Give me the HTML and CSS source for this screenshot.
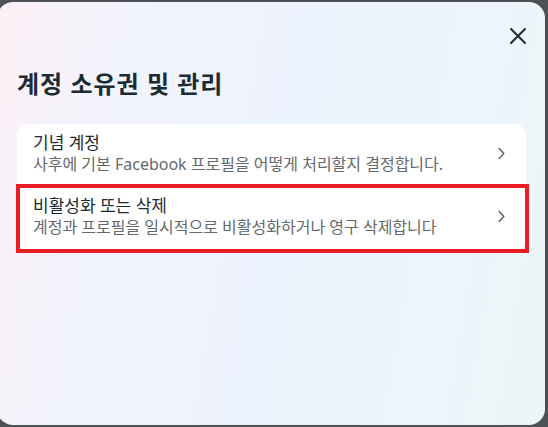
FILE: index.html
```html
<!DOCTYPE html>
<html lang="ko">
<head>
    <meta charset="UTF-8">
    <meta name="viewport" content="width=device-width, initial-scale=1.0">
    <title>계정 소유권 및 관리</title>
    <link rel="stylesheet" href="styles.css">
</head>
<body>
    <div class="dialog">
        <div class="dialog-top">
            <button class="close" aria-label="닫기">
                <svg width="18" height="18" viewBox="0 0 18 18">
                    <path d="M2 2 L16 16 M16 2 L2 16" stroke="#1c2b33" stroke-width="2" stroke-linecap="round" fill="none"/>
                </svg>
            </button>
        </div>
        <h2 class="title">계정 소유권 및 관리</h2>

        <div class="card">
            <a class="item" href="#">
                <div class="item-text">
                    <div class="item-title">기념 계정</div>
                    <div class="item-desc">사후에 기본 Facebook 프로필을 어떻게 처리할지 결정합니다.</div>
                </div>
                <svg class="chevron" width="7" height="13" viewBox="0 0 7 13">
                    <path d="M1.2 1.5 L5.8 6.5 L1.2 11.5" stroke="#606770" stroke-width="1.6" stroke-linecap="round" stroke-linejoin="round" fill="none"/>
                </svg>
            </a>
            <a class="item marked" href="#">
                <div class="item-text">
                    <div class="item-title">비활성화 또는 삭제</div>
                    <div class="item-desc">계정과 프로필을 일시적으로 비활성화하거나 영구 삭제합니다</div>
                </div>
                <svg class="chevron" width="7" height="13" viewBox="0 0 7 13">
                    <path d="M1.2 1.5 L5.8 6.5 L1.2 11.5" stroke="#606770" stroke-width="1.6" stroke-linecap="round" stroke-linejoin="round" fill="none"/>
                </svg>
            </a>
        </div>
    </div>
</body>
</html>
```

FILE: styles.css
```css
body {
    margin: 0;
    background-color: #4d5054;
    font-family: "Noto Sans", "Noto Sans CJK KR", sans-serif;
    overflow: hidden;
}
.dialog {
    box-sizing: border-box;
    width: 548px;
    height: 423px;
    margin: 2px 0 0 -3px;
    padding: 0 19px 0 20px;
    border-radius: 16px;
    background: linear-gradient(100deg, #fdf1f6 0%, #f1f3fd 22%, #edf3fe 50%, #eef4fd 75%, #ebf6f6 100%);
}
.dialog-top {
    display: flex;
    justify-content: flex-end;
    padding-top: 23px;
    height: 23px;
}
.close {
    width: 22px;
    height: 22px;
    padding: 2px;
    margin-right: -3px;
    background: none;
    border: none;
    cursor: pointer;
}
.title {
    margin: 20px 0 0 0;
    font-size: 24px;
    line-height: 32px;
    letter-spacing: 1px;
    font-weight: bold;
    color: #1c2b33;
}
.card {
    margin-top: 24px;
    background-color: #ffffff;
    border-radius: 12px;
}
.item {
    position: relative;
    display: flex;
    align-items: center;
    padding: 8px 21px 12px 16px;
    text-decoration: none;
}
.item-text {
    flex: 1;
}
.item-title {
    font-size: 17px;
    line-height: 22px;
    color: #1c2b33;
}
.item-desc {
    font-size: 16px;
    line-height: 21px;
    color: #65686c;
}
.chevron {
    flex: none;
}
.marked::after {
    content: "";
    position: absolute;
    top: -3px;
    left: -1px;
    right: -3px;
    bottom: -3px;
    border: 4px solid #ea1c24;
}
```
